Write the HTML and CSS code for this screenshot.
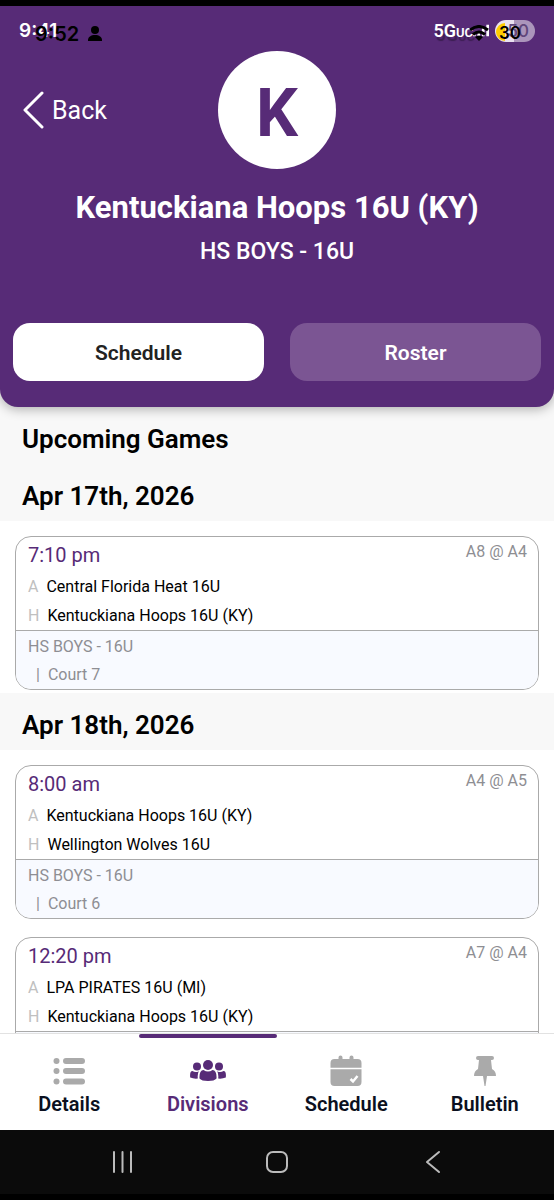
FILE: index.html
```html
<!DOCTYPE html>
<html lang="en">
<head>
<meta charset="utf-8">
<meta name="viewport" content="width=device-width, initial-scale=1">
<title>Kentuckiana Hoops 16U (KY)</title>
<link rel="stylesheet" href="styles.css">
</head>
<body>
<div class="app">
  <header class="team-header">
    <div class="status">
      <span class="clock">9:41</span>
      <span class="network">5G<small>UC</small></span>
      <svg class="bars" viewBox="0 0 18 14" aria-hidden="true"><path d="M0 10h3v3H0zM5 7h3v6H5zM10 4h3v9h-3zM15 0h3v13h-3z"/></svg>
      <span class="battery"><span class="battery-text">50</span></span>
      <div class="status-under">
        <span class="clock-under">9:52</span>
        <svg class="person" viewBox="0 0 14 16" aria-hidden="true"><circle cx="7" cy="4" r="4"/><path d="M0 15v-1c0-3 3-5 7-5s7 2 7 5v1z"/></svg>
        <svg class="wifi" viewBox="0 0 22 16" aria-hidden="true"><path d="M2 5q9-7 18 0M5 9.500q6-5 12 0" fill="none" stroke="#000" stroke-width="3"/><path d="M7 12q4-3 8 0l-4 4z"/></svg>
        <span class="charge"></span>
        <span class="charge-text">30</span>
      </div>
    </div>
    <div class="identity">
      <a class="back" href="#"><svg viewBox="0 0 22 38" aria-hidden="true"><path d="M20 2 3 19l17 17"/></svg>Back</a>
      <div class="avatar">K</div>
    </div>
    <h1 class="team-name">Kentuckiana Hoops 16U (KY)</h1>
    <p class="division">HS BOYS - 16U</p>
    <div class="switch">
      <button class="switch-button switch-on" type="button">Schedule</button>
      <button class="switch-button" type="button">Roster</button>
    </div>
  </header>

  <main class="games">
    <h2 class="heading">Upcoming Games</h2>
    <h2 class="heading">Apr 17th, 2026</h2>
    <article class="game">
      <div class="matchup">
        <div class="game-top"><time class="time">7:10 pm</time><span class="seed">A8 @ A4</span></div>
        <div class="team"><span class="side">A</span>Central Florida Heat 16U</div>
        <div class="team"><span class="side">H</span>Kentuckiana Hoops 16U (KY)</div>
      </div>
      <div class="venue"><div>HS BOYS - 16U</div><div class="court"><span>|</span>Court 7</div></div>
    </article>
    <h2 class="heading">Apr 18th, 2026</h2>
    <article class="game">
      <div class="matchup">
        <div class="game-top"><time class="time">8:00 am</time><span class="seed">A4 @ A5</span></div>
        <div class="team"><span class="side">A</span>Kentuckiana Hoops 16U (KY)</div>
        <div class="team"><span class="side">H</span>Wellington Wolves 16U</div>
      </div>
      <div class="venue"><div>HS BOYS - 16U</div><div class="court"><span>|</span>Court 6</div></div>
    </article>
    <article class="game">
      <div class="matchup">
        <div class="game-top"><time class="time">12:20 pm</time><span class="seed">A7 @ A4</span></div>
        <div class="team"><span class="side">A</span>LPA PIRATES 16U (MI)</div>
        <div class="team"><span class="side">H</span>Kentuckiana Hoops 16U (KY)</div>
      </div>
      <div class="venue venue-last"></div>
    </article>
  </main>

  <nav class="tabs">
    <a class="tab" href="#">
      <svg viewBox="0 0 36 36" aria-hidden="true"><g fill="none" stroke="currentColor" stroke-width="6" stroke-linecap="round"><path d="M15 8H31M15 18H31M15 28.500H31"/></g><circle cx="5.500" cy="8" r="3"/><circle cx="5.500" cy="18" r="3"/><circle cx="5.500" cy="28.500" r="3"/></svg>
      <span>Details</span>
    </a>
    <a class="tab tab-on" href="#">
      <svg viewBox="0 0 36 36" aria-hidden="true"><circle cx="18" cy="12" r="5"/><circle cx="7" cy="13.500" r="4"/><circle cx="29" cy="13.500" r="4"/><path d="M9.500 25.500q-.5-8 4-8.500 4.500 3 9 0 4.500.5 4 8.500-2 2.500-8.500 2.500t-8.500-2.500zM.2 24.500q-.7-6.500 2.300-6.500 3 2 6.300.2-1.500 2.500-1 7.300-4 .5-7.600-1zM35.800 24.500q.7-6.500-2.300-6.500-3 2-6.300.2 1.500 2.500 1 7.300 4 .5 7.600-1z"/></svg>
      <span>Divisions</span>
    </a>
    <a class="tab" href="#">
      <svg viewBox="0 0 36 36" aria-hidden="true"><path d="M2.500 14.800V10q0-4 4-4h4V4.500a2 2 0 0 1 4 0V6h7V4.500a2 2 0 0 1 4 0V6h4q4 0 4 4v4.800zM2.500 16.200h31V29q0 4-4 4h-23q-4 0-4-4z"/><path d="m22.500 26 2.500 2.500 4.500-5.500" fill="none" stroke="#fff" stroke-width="2.500"/></svg>
      <span>Schedule</span>
    </a>
    <a class="tab" href="#">
      <svg viewBox="0 0 36 36" aria-hidden="true"><path d="M11 3h14q2 0 2 2t-2 2h-1l1 9q4 2 4 7H20l-1.500 10h-1L16 23H7q0-5 4-7l1-9h-1q-2 0-2-2t2-2z"/></svg>
      <span>Bulletin</span>
    </a>
  </nav>

  <div class="system">
    <button type="button" aria-label="Recent apps"><svg viewBox="0 0 24 24"><path d="M4 2v20M12.500 2v20M21 2v20"/></svg></button>
    <button type="button" aria-label="Home"><svg viewBox="0 0 24 24"><rect x="2" y="2" width="20" height="20" rx="6"/></svg></button>
    <button type="button" aria-label="Back"><svg viewBox="0 0 24 24"><path d="M19 2 7 12l12 10"/></svg></button>
  </div>
</div>
</body>
</html>
```
FILE: styles.css
```css
* { box-sizing: border-box; }
body { margin: 0; font-family: Roboto, "Liberation Sans", sans-serif; background: #000; color: #000; }
a { color: inherit; text-decoration: none; }
button { font: inherit; border: 0; cursor: pointer; }
.app { display: flex; flex-direction: column; height: 100vh; padding: 6px 0; }

.team-header { position: relative; z-index: 1; flex: none; padding-bottom: 26px; background: #572b77; color: #fff; border-radius: 0 0 18px 18px; box-shadow: 0 2px 12px #00000050; }
.status { position: relative; display: flex; align-items: center; height: 45px; padding: 4px 19px 0; font-family: Inter, sans-serif; font-weight: 600; }
.clock { margin-right: auto; font-size: 19px; }
.network { font-family: Roboto, sans-serif; font-size: 18px; text-shadow: 2px 4px 1px #00000050; }
.network small { font-size: 13px; }
.bars { width: 16px; height: 14px; margin-right: 6px; fill: #fff; }
.battery { display: flex; align-items: center; justify-content: flex-end; width: 40px; height: 22px; padding-right: 6px; border-radius: 11px; background: linear-gradient(90deg, #e9e0f0 19px, #ab95bb 19px); color: #60467a; font-size: 17px; font-weight: 500; }
.status-under { position: absolute; inset: 0; color: #000; }
.status-under > * { position: absolute; }
.clock-under { left: 35px; top: 16px; font-size: 20px; line-height: 24px; }
.person { left: 88px; top: 20px; width: 14px; height: 16px; }
.wifi { right: 64px; top: 19px; width: 22px; height: 16px; }
.charge { right: 49px; top: 17px; width: 9px; height: 18px; border-radius: 9px 0 0 9px; background: #fc0; }
.charge-text { right: 33px; top: 17px; font-size: 17px; line-height: 20px; }

.identity { display: grid; grid-template-columns: 1fr auto 1fr; align-items: center; padding: 0 22px; }
.back { display: flex; align-items: center; gap: 8px; font-size: 25px; }
.back svg { width: 22px; height: 38px; fill: none; stroke: #fff; stroke-width: 3; stroke-linecap: round; stroke-linejoin: round; }
.avatar { display: grid; place-items: center; width: 118px; height: 118px; padding-top: 6px; border-radius: 50%; background: #fff; color: #572b77; font-size: 66px; font-weight: 700; }
.team-name { margin: 19px 0 0; text-align: center; font-size: 31px; line-height: 40px; font-weight: 700; }
.division { margin: 9px 0 56px; text-align: center; font-size: 23px; line-height: 30px; font-weight: 500; }
.switch { display: grid; grid-template-columns: 1fr 1fr; gap: 26px; padding: 0 13px; }
.switch-button { height: 58px; padding-top: 3px; border-radius: 17px; background: #7b5593; color: #fff; font-size: 21px; font-weight: 600; }
.switch-on { background: #fff; color: #222; }

.games { flex: 1; min-height: 0; margin-top: -18px; padding-top: 18px; overflow: hidden; background: #fff; }
.games::before { content: ""; display: block; height: 18px; margin-top: -18px; background: #f8f8f8; }
.heading { margin: 0; padding: 18px 22px 10px; background: #f8f8f8; font-size: 26px; line-height: 29px; font-weight: 600; }
.game { margin: 15px 15px 3px; border: 1px solid #aaa; border-radius: 16px; overflow: hidden; font-size: 16px; }
.game + .game { margin-top: 18px; }
.matchup { padding: 3px 11px 0 12px; }
.game-top { display: flex; justify-content: space-between; height: 33px; }
.time { color: #572b77; font-size: 20px; line-height: 30px; }
.seed { color: #8e8e93; line-height: 24px; }
.team { display: flex; gap: 8px; line-height: 28px; }
.team + .team { margin-top: 1px; }
.side { color: #c0c0c0; }
.venue { padding: 2px 12px 0; border-top: 1px solid #aaa; background: #f8faff; color: #8e8e93; line-height: 28px; }
.court { display: flex; gap: 8px; padding-left: 8px; }
.venue-last { height: 60px; }

.tabs { position: relative; flex: none; display: grid; grid-template-columns: repeat(4, 1fr); background: #fff; border-top: 1px solid #e2e2e2; }
.tab { display: flex; flex-direction: column; align-items: center; gap: 1px; padding: 15px 0 12px; border-top: 4px solid transparent; color: #aaa; }
.tab svg { width: 36px; height: 36px; fill: currentColor; }
.tab span { color: #0b1020; font-size: 20px; line-height: 28px; font-weight: 600; }
.tab-on, .tab-on span { color: #572b77; }
.tab-on { position: relative; }
.tab-on::before { content: ""; position: absolute; inset: -4px 0 auto; height: 4px; border-radius: 2px; background: #572b77; }

.system { flex: none; display: flex; justify-content: space-between; padding: 0 108px; height: 64px; background: #0b0b0b; }
.system button { padding: 0 2px; background: none; }
.system svg { display: block; width: 24px; height: 24px; fill: none; stroke: #bbb; stroke-width: 2; stroke-linecap: round; stroke-linejoin: round; }
```
